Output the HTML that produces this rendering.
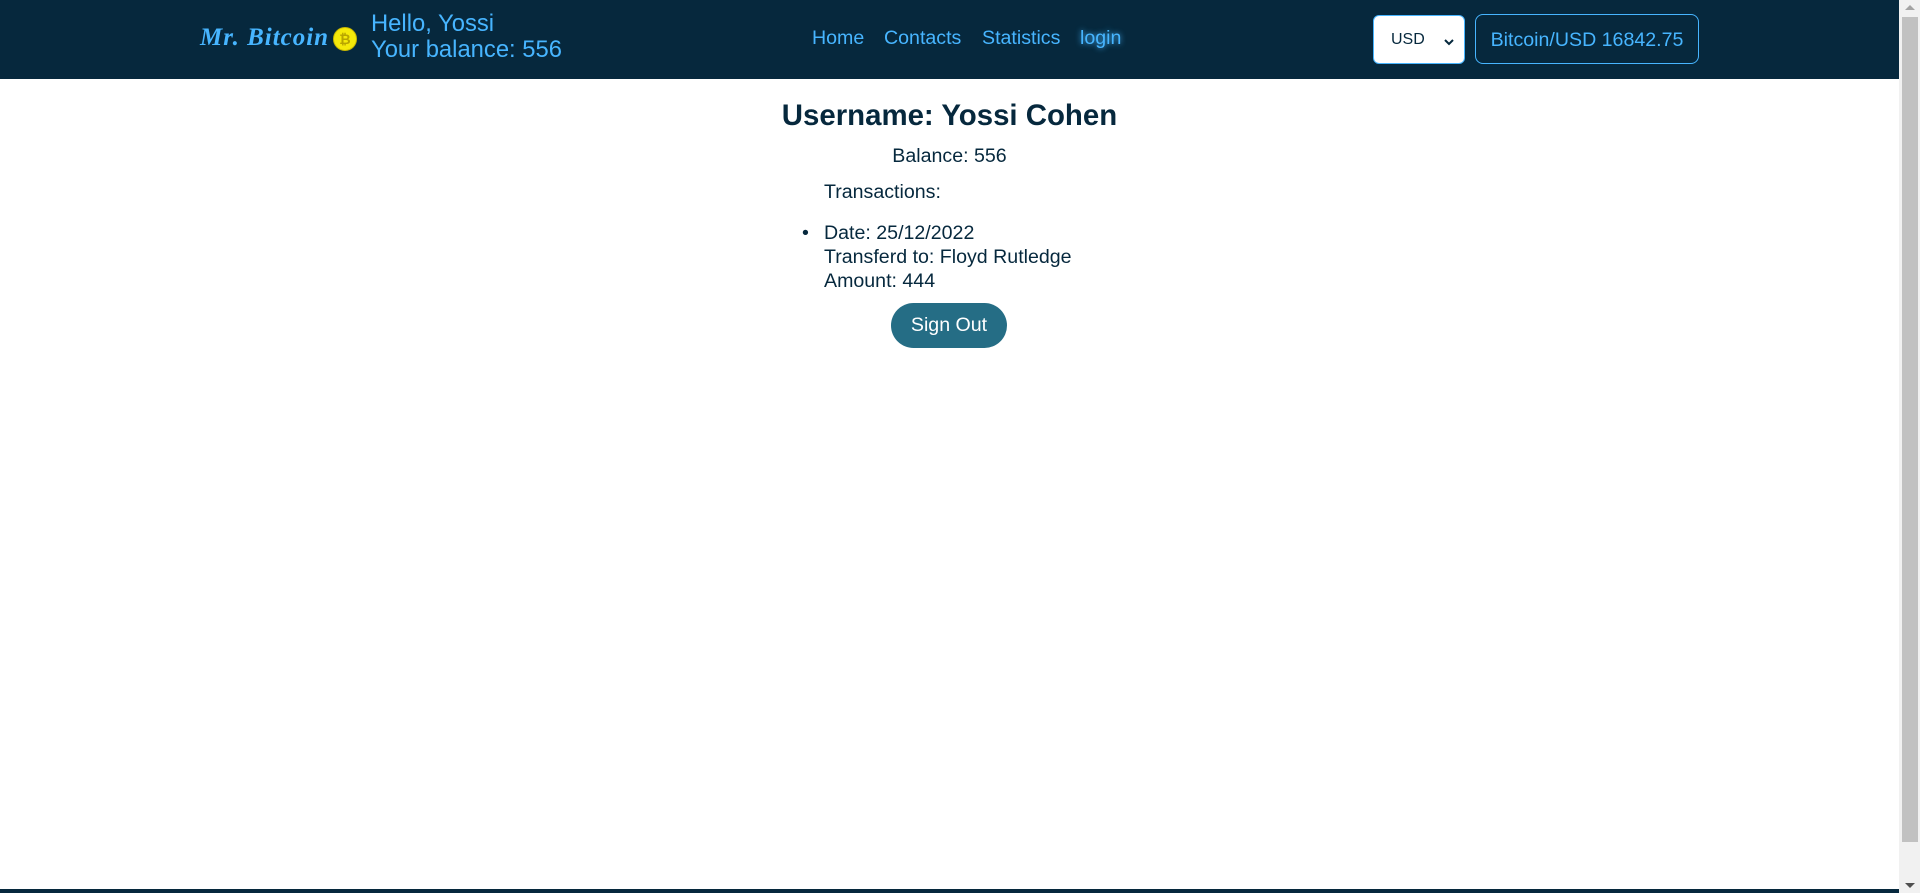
<!DOCTYPE html>
<html><head><meta charset="utf-8"><style>
*{margin:0;padding:0;box-sizing:border-box}
html,body{width:1920px;height:893px;overflow:hidden;background:#fff;font-family:"Liberation Sans",Arial,sans-serif}
.hdr{position:absolute;left:0;top:0;width:1899px;height:79px;background:#06283d}
.logo{position:absolute;left:200px;top:24px;font-family:"Liberation Serif",serif;font-style:italic;font-weight:bold;font-size:25px;color:#47b5ff;letter-spacing:1px}
.coin{position:absolute;left:333px;top:27px;width:24px;height:24px;border-radius:50%;background:#f5e90a;border:1px solid #c9b800;color:#b8a400;font-size:14px;line-height:22px;text-align:center;font-weight:bold}
.hello{position:absolute;left:371px;top:11px;color:#47b5ff;font-size:23.8px;line-height:26px}
.nav{position:absolute;top:27px;color:#47b5ff;font-size:19.6px}
.sel{position:absolute;left:1373px;top:15px;width:92px;height:49px;background:#fff;border-radius:6px;border:1px solid #47b5ff;font-size:16px;color:#06283d}
.box{position:absolute;left:1475px;top:14px;width:224px;height:50px;border:1px solid #47b5ff;border-radius:8px;color:#47b5ff;font-size:19.6px;line-height:48px;text-align:center}
.main{position:absolute;left:0;width:1899px;text-align:center;color:#06283d}
.t{position:absolute;color:#06283d;font-size:19.6px}
.btn{position:absolute;left:891px;top:303px;width:116px;height:45px;border-radius:23px;background:#256d85;color:#fff;font-size:19.6px;line-height:45px;text-align:center}
.sb{position:absolute;left:1899px;top:0;width:21px;height:893px;background:#f1f1f1}
.th{position:absolute;left:1902px;top:17px;width:16px;height:825px;background:#c1c1c1}
.bl{position:absolute;left:0;top:889px;width:1899px;height:4px;background:#06283d}
</style></head><body>
<div class="hdr">
<div class="logo">Mr. Bitcoin</div>
<div class="coin">₿</div>
<div class="hello">Hello, Yossi<br>Your balance: 556</div>
<div class="nav" style="left:812px">Home</div>
<div class="nav" style="left:884px">Contacts</div>
<div class="nav" style="left:982px">Statistics</div>
<div class="nav" style="left:1080px;text-shadow:0 0 6px #47b5ff">login</div>
<div class="sel"><span style="position:absolute;left:17px;top:15px">USD</span>
<svg style="position:absolute;left:69px;top:21px" width="12" height="10" viewBox="0 0 12 10"><path d="M2 3l4 4 4-4" stroke="#06283d" stroke-width="2" fill="none"/></svg></div>
<div class="box" style="line-height:50px">Bitcoin/USD 16842.75</div>
</div>
<div class="main" style="top:99px;font-size:29.4px;font-weight:bold">Username: Yossi Cohen</div>
<div class="main" style="top:145px;font-size:19.6px">Balance: 556</div>
<div class="t" style="left:824px;top:181px">Transactions:</div>
<div class="t" style="left:802px;top:222px">•</div>
<div class="t" style="left:824px;top:221px;line-height:24px">Date: 25/12/2022<br>Transferd to: Floyd Rutledge<br>Amount: 444</div>
<div class="btn">Sign Out</div>
<div class="bl"></div>
<div class="sb"></div><div class="th"></div>
<div style="position:absolute;left:1905px;top:5px;border:5px solid transparent;border-bottom:5px solid #a3a3a3;border-top:0"></div>
<div style="position:absolute;left:1905px;top:883px;border:5px solid transparent;border-top:5px solid #505050;border-bottom:0"></div>
</body></html>
